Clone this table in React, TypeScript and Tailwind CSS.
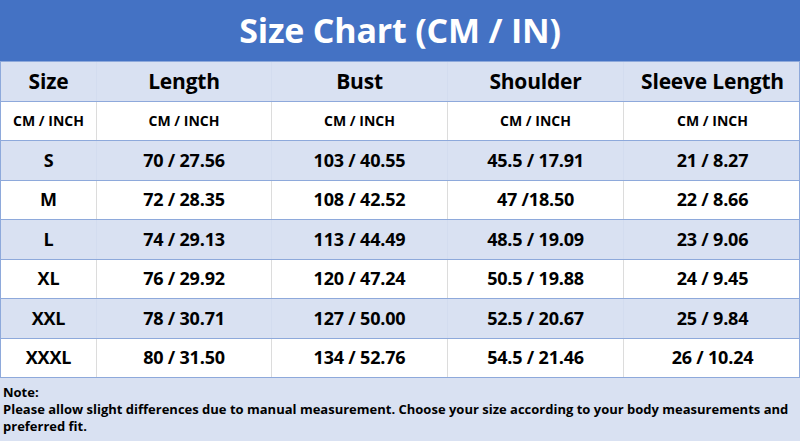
import React from 'react';

type Row = { size: string; length: string; bust: string; shoulder: string; sleeve: string };

const rows: Row[] = [
  { size: 'S', length: '70 / 27.56', bust: '103 / 40.55', shoulder: '45.5 / 17.91', sleeve: '21 / 8.27' },
  { size: 'M', length: '72 / 28.35', bust: '108 / 42.52', shoulder: '47 /18.50', sleeve: '22 / 8.66' },
  { size: 'L', length: '74 / 29.13', bust: '113 / 44.49', shoulder: '48.5 / 19.09', sleeve: '23 / 9.06' },
  { size: 'XL', length: '76 / 29.92', bust: '120 / 47.24', shoulder: '50.5 / 19.88', sleeve: '24 / 9.45' },
  { size: 'XXL', length: '78 / 30.71', bust: '127 / 50.00', shoulder: '52.5 / 20.67', sleeve: '25 / 9.84' },
  { size: 'XXXL', length: '80 / 31.50', bust: '134 / 52.76', shoulder: '54.5 / 21.46', sleeve: '26 / 10.24' },
];

const headers = ['Size', 'Length', 'Bust', 'Shoulder', 'Sleeve Length'];

const cols = 'grid grid-cols-[95px_175px_176px_176px_178px]';

function TableRow({ cells, shaded, className }: { cells: string[]; shaded: boolean; className: string }) {
  return (
    <div
      className={`${cols} h-[39.5px] border-x border-b border-[#8ea9db] ${shaded ? 'bg-[#d9e1f2]' : 'bg-white'}`}
    >
      {cells.map((c, i) => (
        <div
          key={i}
          className={`flex items-center justify-center ${className} ${
            i > 0 ? (shaded ? 'border-l border-[#d3dcef]' : 'border-l border-[#dcdcdc]') : ''
          }`}
        >
          {c}
        </div>
      ))}
    </div>
  );
}

export default function App() {
  return (
    <div className="w-[800px] h-[441px] bg-[#d9e1f2] text-black font-['Open_Sans',sans-serif] font-bold overflow-hidden">
      <div className="h-[62px] bg-[#4472c4] flex items-center justify-center text-white text-[34px] tracking-[-0.2px] border-b border-[#8ea9db]">
        Size Chart (CM / IN)
      </div>
      <TableRow cells={headers} shaded className="text-[21px] tracking-[-0.2px]" />
      <TableRow cells={headers.map(() => 'CM / INCH')} shaded={false} className="text-[14px]" />
      {rows.map((r, i) => (
        <TableRow
          key={r.size}
          cells={[r.size, r.length, r.bust, r.shoulder, r.sleeve]}
          shaded={i % 2 === 0}
          className="text-[18px] tracking-[-0.2px]"
        />
      ))}
      <div className="px-[3px] pt-[6px] text-[13px] leading-[17px]">
        <p>Note:</p>
        <p>
          Please allow slight differences due to manual measurement. Choose your size according to your body
          measurements and preferred fit.
        </p>
      </div>
    </div>
  );
}
